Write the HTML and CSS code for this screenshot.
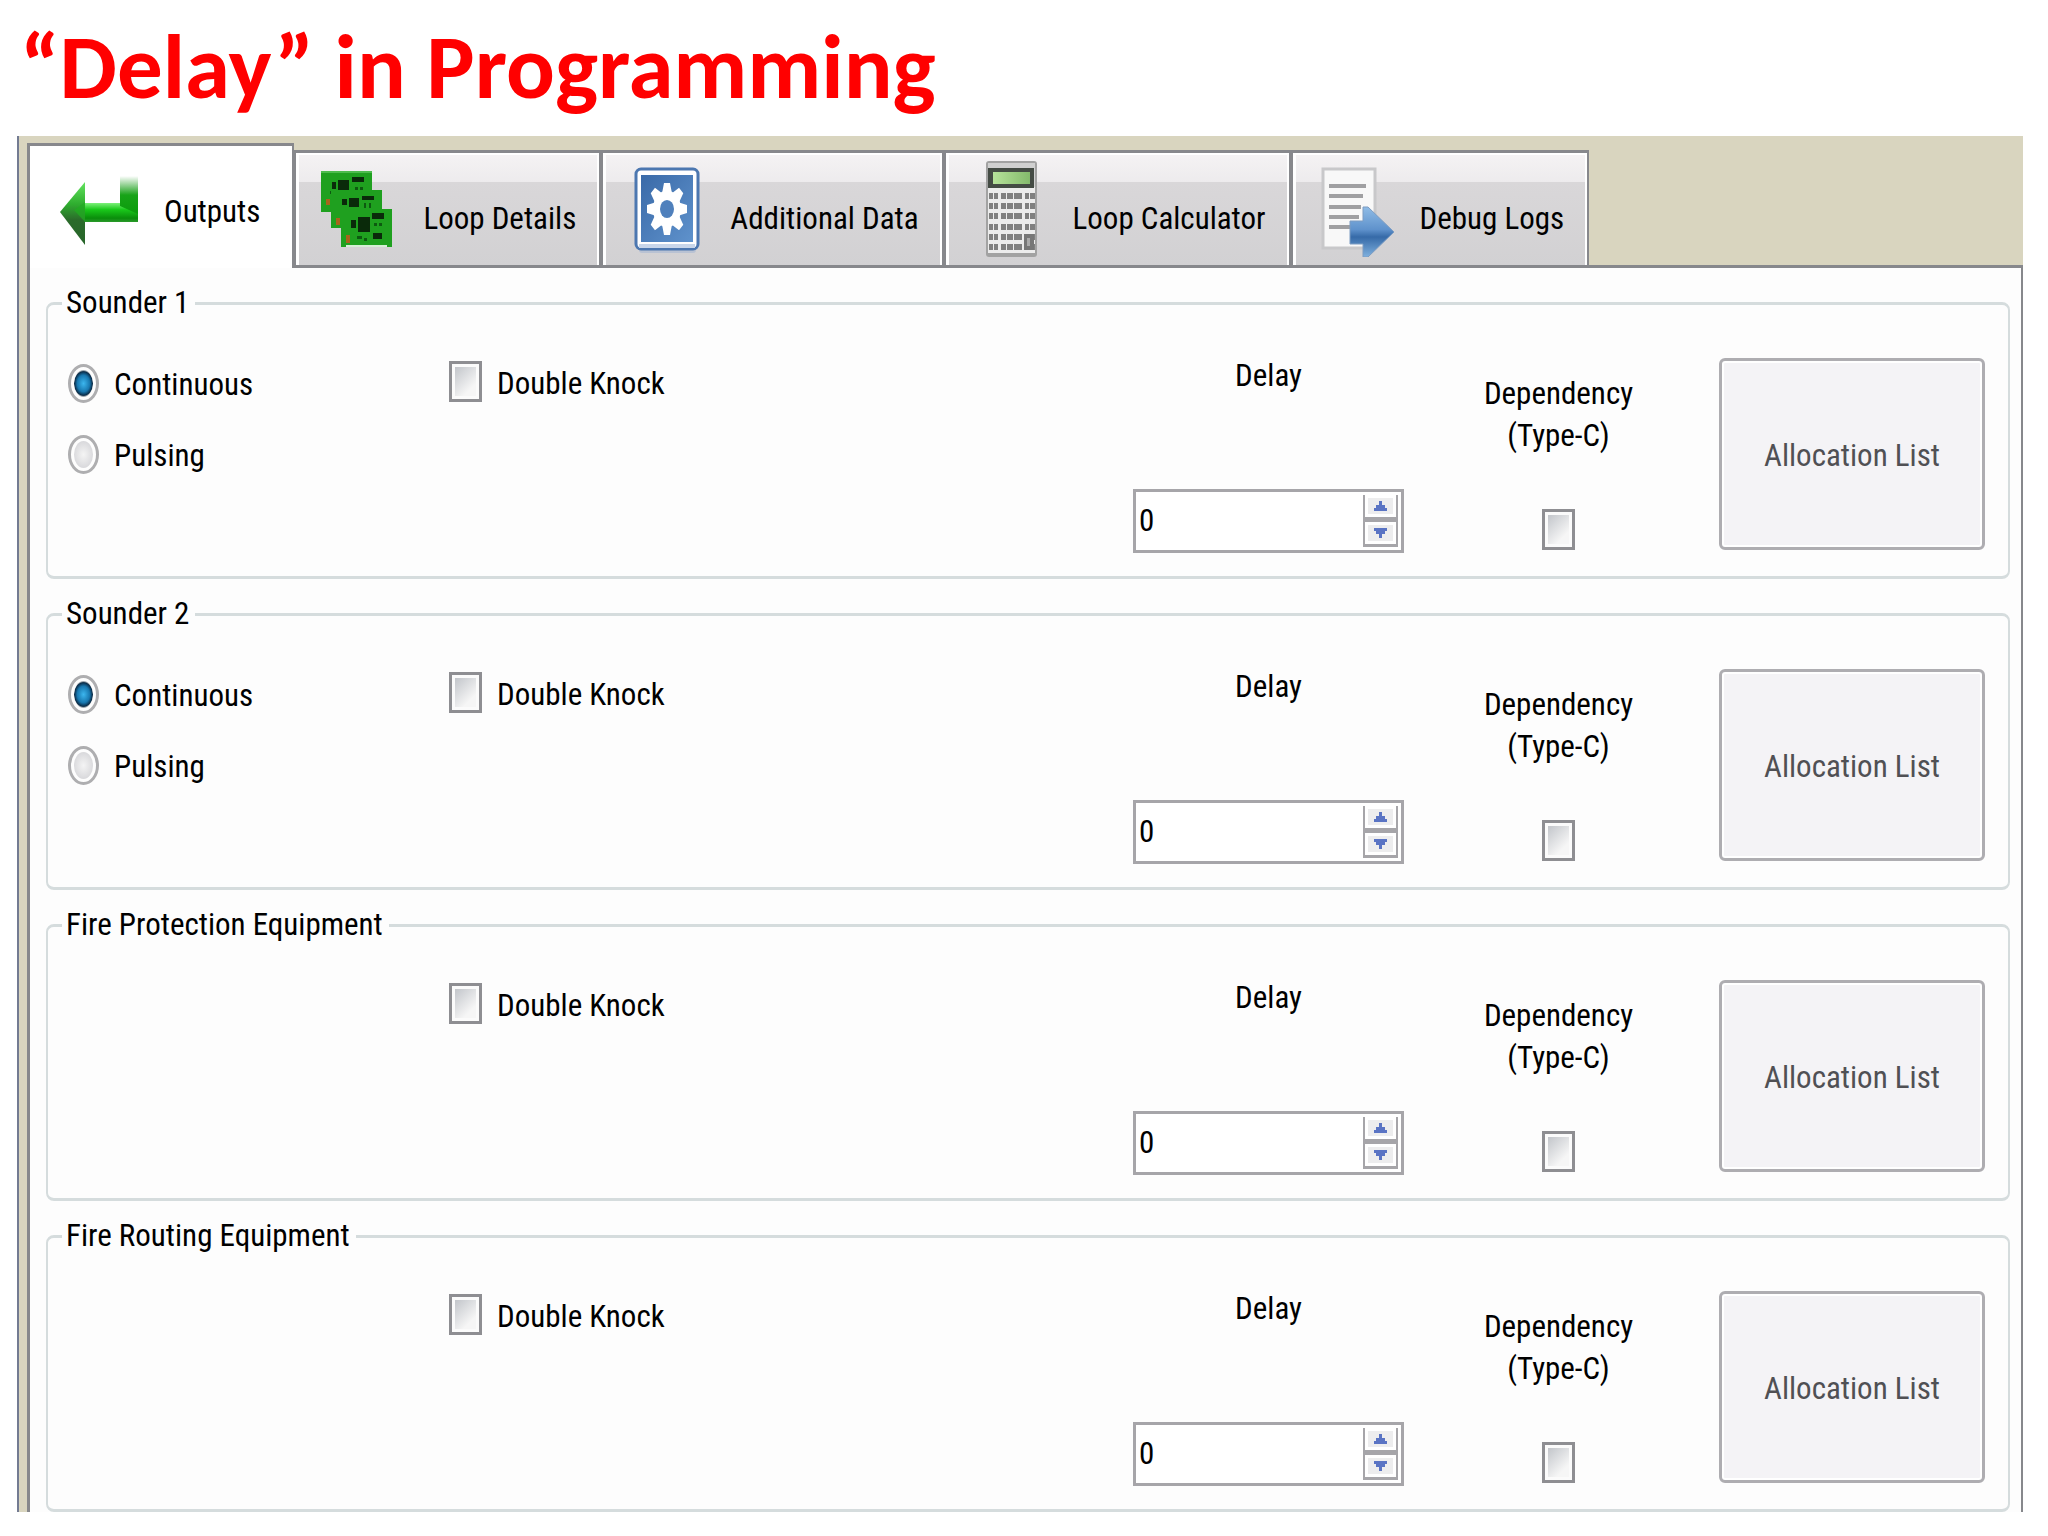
FILE: index.html
```html
<!DOCTYPE html>
<html lang="en">
<head>
<meta charset="utf-8">
<title>“Delay” in Programming</title>
<link rel="stylesheet" href="styles.css">
</head>
<body>
<h1 class="title">“Delay” in Programming</h1>
<main class="window">
  <div class="tabs" role="tablist">
    <button class="tab tab-active" type="button" role="tab" aria-selected="true">
      <svg class="tab-icon" viewBox="0 0 86 96" aria-hidden="true">
        <defs>
          <linearGradient id="shaft" x1="0" y1="0" x2="0" y2="1"><stop offset="0" stop-color="#7df07a"/><stop offset=".35" stop-color="#19c81a"/><stop offset=".8" stop-color="#0a8d0b"/><stop offset="1" stop-color="#2b9a2b"/></linearGradient>
          <linearGradient id="stem" x1="0" y1="0" x2="0" y2="1"><stop offset="0" stop-color="#1c9a1c" stop-opacity="0"/><stop offset=".5" stop-color="#18a318"/><stop offset="1" stop-color="#0a9c0b"/></linearGradient>
          <linearGradient id="head" x1="0" y1="0" x2="0" y2="1"><stop offset="0" stop-color="#63e45f"/><stop offset=".35" stop-color="#2fae2f"/><stop offset=".6" stop-color="#2b6b2b"/><stop offset="1" stop-color="#27652a"/></linearGradient>
        </defs>
        <path d="M28 45h54v19H28z" fill="url(#shaft)"/>
        <path d="M64 18h18v38l-18-8z" fill="url(#stem)"/>
        <path d="M4 54 29 24v63z" fill="url(#head)"/>
        <path d="M18 52l11-8v20z" fill="#1fae20" opacity=".7"/>
      </svg>
      <span class="tab-label">Outputs</span>
    </button>
    <button class="tab" type="button" role="tab" aria-selected="false">
      <svg class="tab-icon" viewBox="0 0 86 96" aria-hidden="true">
        <path d="M3 10h51v41H3z" fill="#1fa01f"/><path d="M3 10h51v2H3z" fill="#4dbb4d"/>
        <path d="M20 19h11v10H20zM14 21h4v7h-4zM34 16h12v5H34z" fill="#0a2a0a"/>
        <path d="M37 26h3v3h-3zM42 26h3v3h-3zM12 30h2v3h-2z" fill="#0d5a10"/>
        <path d="M8 38h4v6H8z" fill="#a5651c"/>
        <g transform="translate(10 19)">
          <path d="M3 10h51v38H3z" fill="#1fa01f"/>
          <path d="M21 18h10v9H21zM14 19h5v6h-5zM34 16h12v4H34z" fill="#0a2a0a"/>
          <path d="M36 23h2v5h-2zM41 23h2v5h-2z" fill="#0d5a10"/><path d="M8 38h4v7H8z" fill="#a5651c"/>
        </g>
        <path d="M23 48h51v38H23z" fill="#1fa01f"/><path d="M28 84h41v2H28z" fill="#d5efd5"/>
        <path d="M40 56h12v15H40zM33 59h5v8h-5zM54 52h12v6H54zM55 72h9v6h-9z" fill="#0a2a0a"/>
        <path d="M56 62h3v3h-3zM61 62h3v3h-3zM39 75h5v3h-5zM46 77h3v3h-3z" fill="#0d5a10"/>
        <path d="M28 74h4v8h-4z" fill="#a5651c"/>
      </svg>
      <span class="tab-label">Loop Details</span>
    </button>
    <button class="tab" type="button" role="tab" aria-selected="false">
      <svg class="tab-icon" viewBox="0 0 86 96" aria-hidden="true">
        <defs><linearGradient id="plate" x1="0" y1="0" x2="1" y2="1"><stop offset="0" stop-color="#3a6aa8"/><stop offset="1" stop-color="#5f92cc"/></linearGradient></defs>
        <rect x="14" y="84" width="57" height="8" rx="3" fill="#b9c2d3"/>
        <rect x="11" y="8" width="62" height="80" rx="5" fill="#fff" stroke="#4c77b0" stroke-width="3"/>
        <rect x="16" y="14" width="52" height="67" fill="url(#plate)"/>
        <path d="M14 83h56v4H14z" fill="#c8d6ea"/>
        <g transform="translate(42 48) scale(1 1.3)" fill="#fff">
          <circle r="14"/>
          <path d="M-3-20h6l2 8H-5zM-3 20h6l2-8H-5z"/>
          <path d="M-20-3v6l8 2V-5zM20-3v6l-8 2V-5z"/>
          <path d="M-3-20h6l2 8H-5zM-3 20h6l2-8H-5zM-20-3v6l8 2V-5zM20-3v6l-8 2V-5z" transform="rotate(45)"/>
          <circle r="7" fill="#4f80bc"/>
        </g>
      </svg>
      <span class="tab-label">Additional Data</span>
    </button>
    <button class="tab" type="button" role="tab" aria-selected="false">
      <svg class="tab-icon" viewBox="0 0 86 96" aria-hidden="true">
        <defs><linearGradient id="lcd" x1="0" y1="0" x2="1" y2="0"><stop offset="0" stop-color="#b6e29a"/><stop offset="1" stop-color="#84ba6c"/></linearGradient></defs>
        <rect x="18" y="0" width="51" height="96" rx="3" fill="#a2a2a2"/>
        <path d="M20 2h47v90H20z" fill="#d0d0d0"/><path d="M20 26h47v66H20z" fill="#ececec"/>
        <path d="M20 7h46v20H20z" fill="#444b44"/><path d="M25 11h37v12H25z" fill="url(#lcd)"/>
        <path d="M21 35h46M21 45h46M21 55h46M21 66h46M21 76h46M21 86h46" stroke="#808080" stroke-width="6" stroke-dasharray="4 1 4 3 5 1 6 1 8 3 4 1 5 0"/>
        <path d="M56 73h10v16H56z" fill="#777"/><path d="M59 77h3v8h-3z" fill="#aaa"/>
      </svg>
      <span class="tab-label">Loop Calculator</span>
    </button>
    <button class="tab" type="button" role="tab" aria-selected="false">
      <svg class="tab-icon" viewBox="0 0 86 96" aria-hidden="true">
        <defs>
          <linearGradient id="send" x1="0" y1="0" x2="0" y2="1"><stop offset="0" stop-color="#8fbce6"/><stop offset=".45" stop-color="#5f92cc"/><stop offset=".6" stop-color="#366aa8"/><stop offset="1" stop-color="#7fb0de"/></linearGradient>
        </defs>
        <path d="M8 8h52v79H8z" fill="#f8f8f8" stroke="#c8c8ca" stroke-width="3"/>
        <path d="M14 25h37M14 35h34M14 46h32M14 56h30M14 66h24" stroke="#a0a0a2" stroke-width="4"/>
        <path d="M35 60h13V46h5l26 25-26 25h-5V83H35z" fill="url(#send)" stroke="#7c9cc2"/>
      </svg>
      <span class="tab-label">Debug Logs</span>
    </button>
  </div>

  <div class="panel" role="tabpanel">
    <fieldset class="group">
      <legend>Sounder 1</legend>
      <div class="group-body">
        <div class="modes">
          <label class="option"><input class="radio" type="radio" name="sounder1" checked>Continuous</label>
          <label class="option"><input class="radio" type="radio" name="sounder1">Pulsing</label>
        </div>
        <div class="knock"><label class="option"><input class="check" type="checkbox">Double Knock</label></div>
        <div class="delay">
          <label for="delay1">Delay</label>
          <div class="spin">
            <input class="spin-value" id="delay1" type="number" value="0">
            <div class="spin-buttons">
              <button class="step" type="button" aria-label="Increase"><svg class="step-icon" viewBox="0 0 14 10"><path d="M5 0h3v4h3v3h2v3H0V7h2V4h3z"/></svg></button>
              <button class="step" type="button" aria-label="Decrease"><svg class="step-icon" viewBox="0 0 14 10"><path d="M5 10h3V6h3V3h2V0H0v3h2v3h3z"/></svg></button>
            </div>
          </div>
        </div>
        <label class="dependency">Dependency<br>(Type-C)<input class="check" type="checkbox"></label>
        <button class="allocation" type="button">Allocation List</button>
      </div>
    </fieldset>

    <fieldset class="group">
      <legend>Sounder 2</legend>
      <div class="group-body">
        <div class="modes">
          <label class="option"><input class="radio" type="radio" name="sounder2" checked>Continuous</label>
          <label class="option"><input class="radio" type="radio" name="sounder2">Pulsing</label>
        </div>
        <div class="knock"><label class="option"><input class="check" type="checkbox">Double Knock</label></div>
        <div class="delay">
          <label for="delay2">Delay</label>
          <div class="spin">
            <input class="spin-value" id="delay2" type="number" value="0">
            <div class="spin-buttons">
              <button class="step" type="button" aria-label="Increase"><svg class="step-icon" viewBox="0 0 14 10"><path d="M5 0h3v4h3v3h2v3H0V7h2V4h3z"/></svg></button>
              <button class="step" type="button" aria-label="Decrease"><svg class="step-icon" viewBox="0 0 14 10"><path d="M5 10h3V6h3V3h2V0H0v3h2v3h3z"/></svg></button>
            </div>
          </div>
        </div>
        <label class="dependency">Dependency<br>(Type-C)<input class="check" type="checkbox"></label>
        <button class="allocation" type="button">Allocation List</button>
      </div>
    </fieldset>

    <fieldset class="group">
      <legend>Fire Protection Equipment</legend>
      <div class="group-body">
        <div class="modes"></div>
        <div class="knock"><label class="option"><input class="check" type="checkbox">Double Knock</label></div>
        <div class="delay">
          <label for="delay3">Delay</label>
          <div class="spin">
            <input class="spin-value" id="delay3" type="number" value="0">
            <div class="spin-buttons">
              <button class="step" type="button" aria-label="Increase"><svg class="step-icon" viewBox="0 0 14 10"><path d="M5 0h3v4h3v3h2v3H0V7h2V4h3z"/></svg></button>
              <button class="step" type="button" aria-label="Decrease"><svg class="step-icon" viewBox="0 0 14 10"><path d="M5 10h3V6h3V3h2V0H0v3h2v3h3z"/></svg></button>
            </div>
          </div>
        </div>
        <label class="dependency">Dependency<br>(Type-C)<input class="check" type="checkbox"></label>
        <button class="allocation" type="button">Allocation List</button>
      </div>
    </fieldset>

    <fieldset class="group">
      <legend>Fire Routing Equipment</legend>
      <div class="group-body">
        <div class="modes"></div>
        <div class="knock"><label class="option"><input class="check" type="checkbox">Double Knock</label></div>
        <div class="delay">
          <label for="delay4">Delay</label>
          <div class="spin">
            <input class="spin-value" id="delay4" type="number" value="0">
            <div class="spin-buttons">
              <button class="step" type="button" aria-label="Increase"><svg class="step-icon" viewBox="0 0 14 10"><path d="M5 0h3v4h3v3h2v3H0V7h2V4h3z"/></svg></button>
              <button class="step" type="button" aria-label="Decrease"><svg class="step-icon" viewBox="0 0 14 10"><path d="M5 10h3V6h3V3h2V0H0v3h2v3h3z"/></svg></button>
            </div>
          </div>
        </div>
        <label class="dependency">Dependency<br>(Type-C)<input class="check" type="checkbox"></label>
        <button class="allocation" type="button">Allocation List</button>
      </div>
    </fieldset>
  </div>
</main>
</body>
</html>
```
FILE: styles.css
```css
* { box-sizing: border-box; }

body {
  margin: 0;
  background: #fff;
  color: #000;
  font: 31px/36px "Roboto Condensed", Roboto, sans-serif;
}

button, input { font: inherit; color: inherit; margin: 0; }

.title {
  margin: 0;
  padding: 0 20px;
  color: #f00;
  font: bold 91px/134px Carlito, Lato, sans-serif;
  padding-bottom: 2px;
}

.window {
  margin: 0 25px 24px 17px;
  padding: 7px 0 0 8px;
  border-left: 2px solid #737b92;
  background: #d9d5bf;
}

/* Tab strip */
.tabs {
  display: flex;
  align-items: flex-end;
  margin-bottom: -3px;
  position: relative;
}

.tab {
  display: flex;
  align-items: center;
  gap: 19px;
  height: 118px;
  padding: 0 23px 0 22px;
  border: solid #87888c;
  border-width: 3px 2px;
  background: linear-gradient(#f5f3f4, #edebed 26%, #d9d7d9 26%, #d2d1d3);
  box-shadow: inset 3px 2px #fff, inset -2px 0 #fff;
  white-space: nowrap;
}

.tab-active {
  gap: 22px;
  height: 125px;
  padding: 0 32px 3px 26px;
  border-width: 3px 2px 0 3px;
  background: #fff;
  box-shadow: none;
}

.tab-icon { width: 86px; height: 96px; flex: none; }
.tab-label { padding-top: 20px; }
.tab-active .tab-label { padding-top: 12px; }

/* Output groups */
.panel {
  display: flex;
  flex-direction: column;
  gap: 17px;
  padding: 17px 11px 0 16px;
  border: solid #87888c;
  border-width: 3px 2px 0 3px;
  background: #fdfdfd;
}

.group {
  min-width: 0;
  margin: 0;
  padding: 0 23px 0 20px;
  border: solid #d5dcdd;
  border-width: 3px 2px;
  border-radius: 8px;
}

.group legend { margin-left: -6px; padding: 0 6px 0 4px; }

.group-body {
  display: grid;
  grid-template-columns: minmax(0, 381fr) minmax(0, 684fr) minmax(0, 271fr) minmax(0, 309fr) minmax(0, 272fr);
  padding: 37px 0 23px;
}

.modes {
  display: flex;
  flex-direction: column;
  gap: 32px;
  padding-top: 6px;
}

.knock { padding-top: 3px; }

.option { display: flex; align-items: flex-end; gap: 15px; }

.radio, .check {
  appearance: none;
  flex: none;
}

.radio {
  width: 31px;
  height: 39px;
  border: 3px solid #aeaeb0;
  border-radius: 50%;
  background: radial-gradient(closest-side, #f4f4f4, #d9d9dc 80%, #bbb);
  background-clip: content-box;
  padding: 3px;
}

.radio:checked {
  background: radial-gradient(closest-side, #3cb6ee, #1878b0 50%, #0a2c48 72%, #9aa4ac 78%, #dcdcdc);
  background-clip: content-box;
}

.check {
  width: 33px;
  height: 41px;
  padding: 3px;
  border: 3px solid #8e8e92;
  background: linear-gradient(135deg, #c2c5ca, #f6f6f6 75%) content-box, #fbfbfb;
}

.delay {
  display: flex;
  flex-direction: column;
  align-items: center;
  justify-content: space-between;
  height: 195px;
}

.spin {
  display: flex;
  width: 100%;
  height: 64px;
  padding: 3px;
  border: 3px solid #a6a5a9;
  background: #fff;
}

.spin-value {
  flex: 1;
  min-width: 0;
  padding: 0;
  border: 0;
  outline: 0;
  background: none;
  appearance: textfield;
}

.spin-value::-webkit-inner-spin-button { appearance: none; }

.spin-buttons {
  display: grid;
  grid-template-rows: 1fr 1fr;
  gap: 5px;
  width: 35px;
  border: solid #a6a5a9;
  border-width: 0 2px 3px;
  background: #a6a5a9;
}

.step {
  display: flex;
  align-items: center;
  justify-content: center;
  min-height: 0;
  padding: 0;
  border: 3px solid #fff;
  background: #ededee;
}

.step-icon { width: 14px; height: 10px; fill: #5a74c4; }

.dependency {
  display: flex;
  flex-direction: column;
  align-items: center;
  padding-top: 15px;
  line-height: 42px;
  text-align: center;
}

.dependency .check { margin-top: 52px; }

.allocation {
  height: 192px;
  margin-left: 6px;
  padding: 4px 0 0;
  border: 3px solid #aeadb1;
  border-radius: 6px;
  background: #f4f3f6;
  box-shadow: inset 0 0 0 2px #fff;
  color: #505054;
}
```
